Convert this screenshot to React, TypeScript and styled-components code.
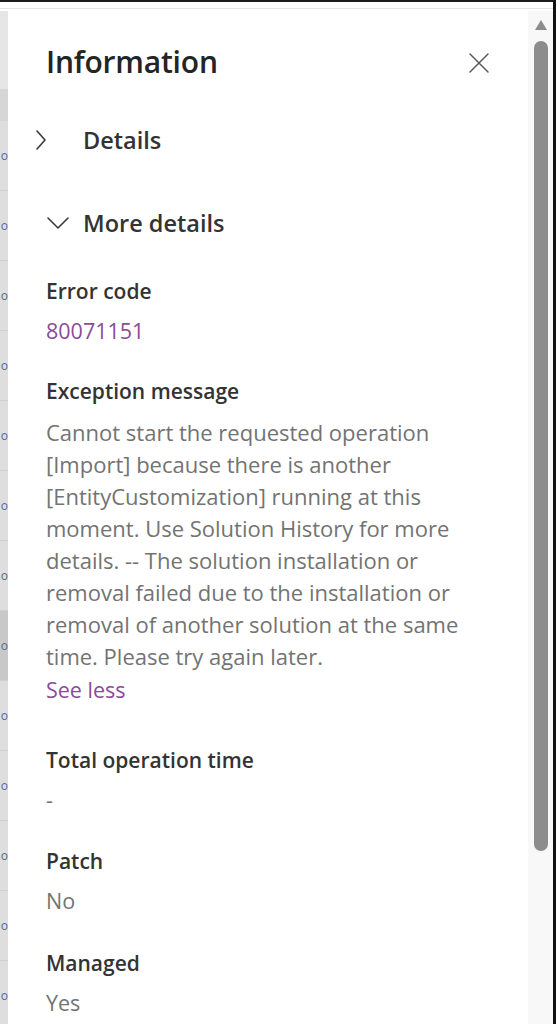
import React from 'react';
import styled, { createGlobalStyle } from 'styled-components';

const GlobalStyle = createGlobalStyle`
  html, body {
    margin: 0;
    padding: 0;
    background: #ffffff;
  }
  body {
    font-family: "Open Sans", "Noto Sans", "Liberation Sans", sans-serif;
  }
`;

const Frame = styled.div`
  width: 556px;
  height: 1024px;
  box-sizing: border-box;
  border-top: 2px solid #1c1c1c;
  border-right: 3px solid #111111;
  display: flex;
  flex-direction: column;
  overflow: hidden;
  background: #ffffff;
`;

const TopGap = styled.div`
  height: 6px;
  border-bottom: 1px solid #e4e4e4;
  flex: none;
`;

const Body = styled.div`
  flex: 1;
  display: flex;
  min-height: 0;
  padding-top: 2px;
`;

const LeftStrip = styled.div`
  width: 8px;
  flex: none;
  display: flex;
  flex-direction: column;
  overflow: hidden;
  background: #dcdcdc;
  box-shadow: inset -3px 0 4px rgba(0, 0, 0, 0.08);
`;

const StripHead = styled.div<{ $h: number; $bg: string }>`
  height: ${p => p.$h}px;
  flex: none;
  background: ${p => p.$bg};
`;

const StripRow = styled.div<{ $selected?: boolean }>`
  height: 70px;
  flex: none;
  box-sizing: border-box;
  border-bottom: 1px solid #cfcfcf;
  background: ${p => (p.$selected ? '#c8c8c8' : '#dedede')};
  display: flex;
  align-items: center;
  justify-content: flex-end;
  font-size: 12px;
  line-height: 14px;
  color: #4f6f8f;
`;

const Panel = styled.div`
  flex: 1;
  padding: 30px 0 0 38px;
  display: flex;
  flex-direction: column;
  min-width: 0;
`;

const TitleRow = styled.div`
  display: flex;
  align-items: center;
  justify-content: space-between;
  padding-right: 37px;
  height: 54px;
`;

const Title = styled.h1`
  margin: 0;
  font-size: 30px;
  font-weight: 600;
  color: #242424;
  letter-spacing: -0.2px;
`;

const CloseButton = styled.button`
  border: none;
  background: none;
  padding: 0;
  width: 24px;
  height: 24px;
  margin-top: 2px;
  display: flex;
  align-items: center;
  justify-content: center;
  cursor: pointer;
`;

const SectionHeader = styled.div<{ $top: number }>`
  display: flex;
  align-items: center;
  height: 40px;
  margin-top: ${p => p.$top}px;
  margin-left: -11px;
`;

const IconSlot = styled.div<{ $indent: number }>`
  width: 48px;
  flex: none;
  display: flex;
  align-items: center;
  padding-left: ${p => p.$indent}px;
  box-sizing: border-box;
`;

const SectionTitle = styled.span`
  font-size: 23.5px;
  font-weight: 600;
  color: #333333;
`;

const Fields = styled.div`
  display: flex;
  flex-direction: column;
  margin-top: 36px;
`;

const Field = styled.div<{ $gap?: number }>`
  display: flex;
  flex-direction: column;
  margin-bottom: ${p => p.$gap ?? 29}px;
`;

const Label = styled.div`
  font-size: 21px;
  font-weight: 600;
  color: #333333;
  line-height: 32px;
  margin-bottom: 8px;
`;

const Value = styled.div<{ $link?: boolean }>`
  font-size: 21.5px;
  line-height: 32px;
  color: ${p => (p.$link ? '#8b4b99' : '#737373')};
`;

const Paragraph = styled.div`
  font-size: 22px;
  line-height: 32px;
  color: #737373;
  max-width: 416px;
  margin-top: 1px;
`;

const LinkText = styled.a`
  font-size: 21.5px;
  line-height: 32px;
  margin-top: 2px;
  color: #8b4b99;
  text-decoration: none;
  cursor: pointer;
`;

const Scrollbar = styled.div`
  width: 25px;
  flex: none;
  background: #f8f8f8;
  display: flex;
  flex-direction: column;
  align-items: center;
  padding-top: 8px;
`;

const ScrollThumb = styled.div`
  width: 14px;
  height: 810px;
  margin-top: 10px;
  border-radius: 7px;
  background: #8c8c8c;
`;

const ChevronRight = () => (
  <svg width="12" height="22" viewBox="0 0 12 22" fill="none">
    <path d="M2 2 L10 11 L2 20" stroke="#3a3a3a" strokeWidth="1.6" strokeLinecap="round" strokeLinejoin="round" />
  </svg>
);

const ChevronDown = () => (
  <svg width="24" height="16" viewBox="0 0 24 16" fill="none">
    <path d="M2 3 L12 13 L22 3" stroke="#3a3a3a" strokeWidth="1.6" strokeLinecap="round" strokeLinejoin="round" />
  </svg>
);

const CloseIcon = () => (
  <svg width="22" height="22" viewBox="0 0 22 22" fill="none">
    <path d="M2 2 L20 20 M20 2 L2 20" stroke="#5a5a5a" strokeWidth="1.5" strokeLinecap="round" />
  </svg>
);

const ScrollUp = () => (
  <svg width="14" height="12" viewBox="0 0 14 12">
    <path d="M7 1 L13 11 L1 11 Z" fill="#8c8c8c" />
  </svg>
);

const stripRows = Array.from({ length: 13 }, (_, i) => i);

function App() {
  return (
    <>
      <GlobalStyle />
      <Frame>
        <TopGap />
        <Body>
          <LeftStrip>
            <StripHead $h={78} $bg="#e6e6e6" />
            <StripHead $h={32} $bg="#d6d6d6" />
            {stripRows.map(i => (
              <StripRow key={i} $selected={i === 7}>
                o
              </StripRow>
            ))}
          </LeftStrip>

          <Panel>
            <TitleRow>
              <Title>Information</Title>
              <CloseButton aria-label="Close">
                <CloseIcon />
              </CloseButton>
            </TitleRow>

            <SectionHeader $top={42}>
              <IconSlot $indent={0}>
                <ChevronRight />
              </IconSlot>
              <SectionTitle>Details</SectionTitle>
            </SectionHeader>

            <SectionHeader $top={51}>
              <IconSlot $indent={11}>
                <ChevronDown />
              </IconSlot>
              <SectionTitle>More details</SectionTitle>
            </SectionHeader>

            <Fields>
              <Field $gap={28}>
                <Label>Error code</Label>
                <Value $link>80071151</Value>
              </Field>

              <Field $gap={38}>
                <Label>Exception message</Label>
                <Paragraph>
                  Cannot start the requested operation [Import] because there is another
                  [EntityCustomization] running at this moment. Use Solution History for more
                  details. -- The solution installation or removal failed due to the installation
                  or removal of another solution at the same time. Please try again later.
                </Paragraph>
                <LinkText>See less</LinkText>
              </Field>

              <Field>
                <Label>Total operation time</Label>
                <Value>-</Value>
              </Field>

              <Field $gap={30}>
                <Label>Patch</Label>
                <Value>No</Value>
              </Field>

              <Field>
                <Label>Managed</Label>
                <Value>Yes</Value>
              </Field>
            </Fields>
          </Panel>

          <Scrollbar>
            <ScrollUp />
            <ScrollThumb />
          </Scrollbar>
        </Body>
      </Frame>
    </>
  );
}

export default App;
